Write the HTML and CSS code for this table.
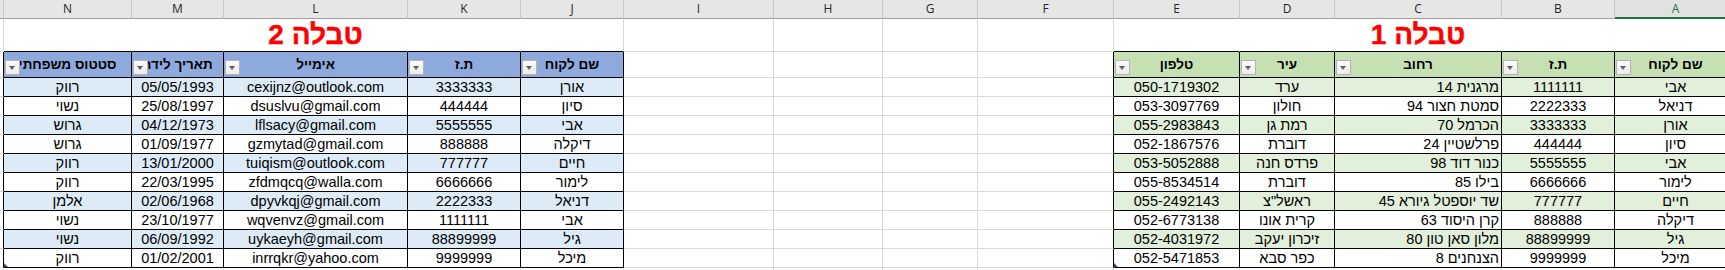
FILE: index.html
```html
<!DOCTYPE html>
<html lang="he">
<head>
<meta charset="utf-8">
<title>Sheet</title>
<link rel="stylesheet" href="styles.css">
</head>
<body>
<div class="sheet">
  <!-- column letters -->
  <div class="colh g"></div>
  <div class="colh">N</div><div class="colh">M</div><div class="colh">L</div><div class="colh">K</div><div class="colh">J</div>
  <div class="colh">I</div><div class="colh">H</div><div class="colh">G</div><div class="colh">F</div>
  <div class="colh">E</div><div class="colh">D</div><div class="colh">C</div><div class="colh">B</div><div class="colh sel">A</div>

  <!-- title row -->
  <div class="c g"></div>
  <div class="c t"></div><div class="c t"></div><div class="c t title">טבלה 2</div><div class="c t"></div><div class="c t tl"></div>
  <div class="c"></div><div class="c"></div><div class="c"></div><div class="c"></div>
  <div class="c t"></div><div class="c t"></div><div class="c t title">טבלה 1</div><div class="c t"></div><div class="c t"></div>

  <!-- header row -->
  <div class="c g e"></div>
  <div class="h hb"><span class="fb"></span>סטטוס משפחתי</div>
  <div class="h hb"><span class="fb"></span>תאריך לידה</div>
  <div class="h hb"><span class="fb"></span>אימייל</div>
  <div class="h hb"><span class="fb"></span>ת.ז</div>
  <div class="h hb"><span class="fb"></span>שם לקוח</div>
  <div class="c"></div><div class="c"></div><div class="c"></div><div class="c e"></div>
  <div class="h hg"><span class="fb"></span>טלפון</div>
  <div class="h hg"><span class="fb"></span>עיר</div>
  <div class="h hg"><span class="fb"></span>רחוב</div>
  <div class="h hg"><span class="fb"></span>ת.ז</div>
  <div class="h hg"><span class="fb"></span>שם לקוח</div>

  <!-- row 1 -->
  <div class="c g e"></div>
  <div class="d bb">רווק</div><div class="d bb">05/05/1993</div><div class="d bb">cexijnz@outlook.com</div><div class="d bb">3333333</div><div class="d bb">אורן</div>
  <div class="c"></div><div class="c"></div><div class="c"></div><div class="c e"></div>
  <div class="d gb">050-1719302</div><div class="d gb">ערד</div><div class="d gb r">מרגנית 14</div><div class="d gb">1111111</div><div class="d gb">אבי</div>

  <!-- row 2 -->
  <div class="c g e"></div>
  <div class="d">נשוי</div><div class="d">25/08/1997</div><div class="d">dsuslvu@gmail.com</div><div class="d">444444</div><div class="d">סיון</div>
  <div class="c"></div><div class="c"></div><div class="c"></div><div class="c e"></div>
  <div class="d">053-3097769</div><div class="d">חולון</div><div class="d r">סמטת חצור 94</div><div class="d">2222333</div><div class="d">דניאל</div>

  <!-- row 3 -->
  <div class="c g e"></div>
  <div class="d bb">גרוש</div><div class="d bb">04/12/1973</div><div class="d bb">lflsacy@gmail.com</div><div class="d bb">5555555</div><div class="d bb">אבי</div>
  <div class="c"></div><div class="c"></div><div class="c"></div><div class="c e"></div>
  <div class="d gb">055-2983843</div><div class="d gb">רמת גן</div><div class="d gb r">הכרמל 70</div><div class="d gb">3333333</div><div class="d gb">אורן</div>

  <!-- row 4 -->
  <div class="c g e"></div>
  <div class="d">גרוש</div><div class="d">01/09/1977</div><div class="d">gzmytad@gmail.com</div><div class="d">888888</div><div class="d">דיקלה</div>
  <div class="c"></div><div class="c"></div><div class="c"></div><div class="c e"></div>
  <div class="d">052-1867576</div><div class="d">דוברת</div><div class="d r">פרלשטיין 24</div><div class="d">444444</div><div class="d">סיון</div>

  <!-- row 5 -->
  <div class="c g e"></div>
  <div class="d bb">רווק</div><div class="d bb">13/01/2000</div><div class="d bb">tuiqism@outlook.com</div><div class="d bb">777777</div><div class="d bb">חיים</div>
  <div class="c"></div><div class="c"></div><div class="c"></div><div class="c e"></div>
  <div class="d gb">053-5052888</div><div class="d gb">פרדס חנה</div><div class="d gb r">כנור דוד 98</div><div class="d gb">5555555</div><div class="d gb">אבי</div>

  <!-- row 6 -->
  <div class="c g e"></div>
  <div class="d">רווק</div><div class="d">22/03/1995</div><div class="d">zfdmqcq@walla.com</div><div class="d">6666666</div><div class="d">לימור</div>
  <div class="c"></div><div class="c"></div><div class="c"></div><div class="c e"></div>
  <div class="d">055-8534514</div><div class="d">דוברת</div><div class="d r">בילו 85</div><div class="d">6666666</div><div class="d">לימור</div>

  <!-- row 7 -->
  <div class="c g e"></div>
  <div class="d bb">אלמן</div><div class="d bb">02/06/1968</div><div class="d bb">dpyvkqj@gmail.com</div><div class="d bb">2222333</div><div class="d bb">דניאל</div>
  <div class="c"></div><div class="c"></div><div class="c"></div><div class="c e"></div>
  <div class="d gb">055-2492143</div><div class="d gb">ראשל"צ</div><div class="d gb r">שד יוספטל גיורא 45</div><div class="d gb">777777</div><div class="d gb">חיים</div>

  <!-- row 8 -->
  <div class="c g e"></div>
  <div class="d">נשוי</div><div class="d">23/10/1977</div><div class="d">wqvenvz@gmail.com</div><div class="d">1111111</div><div class="d">אבי</div>
  <div class="c"></div><div class="c"></div><div class="c"></div><div class="c e"></div>
  <div class="d">052-6773138</div><div class="d">קרית אונו</div><div class="d r">קרן היסוד 63</div><div class="d">888888</div><div class="d">דיקלה</div>

  <!-- row 9 -->
  <div class="c g e"></div>
  <div class="d bb">נשוי</div><div class="d bb">06/09/1992</div><div class="d bb">uykaeyh@gmail.com</div><div class="d bb">88899999</div><div class="d bb">גיל</div>
  <div class="c"></div><div class="c"></div><div class="c"></div><div class="c e"></div>
  <div class="d gb">052-4031972</div><div class="d gb">זיכרון יעקב</div><div class="d gb r">מלון סאן טון 80</div><div class="d gb">88899999</div><div class="d gb">גיל</div>

  <!-- row 10 -->
  <div class="c g e"></div>
  <div class="d corner">רווק</div><div class="d">01/02/2001</div><div class="d">inrrqkr@yahoo.com</div><div class="d">9999999</div><div class="d">מיכל</div>
  <div class="c"></div><div class="c"></div><div class="c"></div><div class="c e"></div>
  <div class="d corner">052-5471853</div><div class="d">כפר סבא</div><div class="d r">הצנחנים 8</div><div class="d">9999999</div><div class="d">מיכל</div>

  <!-- empty row below -->
  <div class="c g"></div>
  <div class="c"></div><div class="c"></div><div class="c"></div><div class="c"></div><div class="c"></div>
  <div class="c"></div><div class="c"></div><div class="c"></div><div class="c"></div>
  <div class="c"></div><div class="c"></div><div class="c"></div><div class="c"></div><div class="c"></div>
</div>
</body>
</html>
```

FILE: styles.css
```css
html, body {
  margin: 0;
  padding: 0;
  background: #ffffff;
}

body {
  width: 1725px;
  height: 270px;
  overflow: hidden;
  font-family: "Liberation Sans", Arial, sans-serif;
  color: #000;
}

.sheet {
  display: grid;
  width: 1737px;
  grid-template-columns: 4px 128px 92px 184px 113px 103px 150px 109px 95px 136px 126px 95px 167px 113px 122px;
  grid-template-rows: 19px 33px 26px repeat(10, 19px) 19px;
}

.sheet > div {
  box-sizing: border-box;
  overflow: hidden;
  white-space: nowrap;
}

/* column letter headers */
.colh {
  background: #e6e6e6;
  border-right: 1px solid #c9c9c9;
  border-bottom: 1px solid #9f9f9f;
  font-family: "Open Sans", "Noto Sans", sans-serif;
  font-size: 12px;
  line-height: 18px;
  text-align: center;
  color: #262626;
}

.colh.sel {
  border-bottom: 2px solid #217346;
  color: #217346;
  background: #e1e1e1;
}

/* plain grid cells */
.c {
  border-right: 1px solid #d8d8d8;
  border-bottom: 1px solid #d8d8d8;
}

.c.e {
  border-right-color: #000;
}

/* title row cells inside the table areas */
.c.t {
  border-right-color: #ffffff;
  border-bottom-color: #000;
}

.c.t.tl {
  border-right-color: #d8d8d8;
}

.title {
  direction: rtl;
  text-align: center;
  color: #ff0000;
  font-weight: bold;
  font-size: 28px;
  line-height: 30px;
  padding-top: 1px;
  -webkit-text-stroke: 0.4px #ff0000;
}

/* table headers */
.h {
  position: relative;
  direction: rtl;
  border-right: 1px solid #000;
  border-bottom: 1px solid #000;
  font-weight: bold;
  font-size: 13.5px;
  line-height: 24px;
  padding-top: 1px;
  text-align: center;
}

.hb { background: #8ea9db; }
.hg { background: #c6e0b4; }

.fb {
  position: absolute;
  left: 1px;
  bottom: 2px;
  width: 15px;
  height: 15px;
  box-sizing: border-box;
  border: 1px solid #b3b3b3;
  background: linear-gradient(#fbfbfb, #ececec);
}

.fb::after {
  content: "";
  position: absolute;
  left: 3px;
  top: 5px;
  width: 0;
  height: 0;
  border-left: 3.5px solid transparent;
  border-right: 3.5px solid transparent;
  border-top: 4px solid #5f5f5f;
}

/* data cells */
.d {
  position: relative;
  direction: rtl;
  border-right: 1px solid #000;
  border-bottom: 1px solid #000;
  font-size: 14.5px;
  line-height: 17px;
  padding-top: 1px;
  text-align: center;
}

.d.r {
  text-align: right;
  padding-right: 2px;
}

.bb { background: #ddebf7; }
.gb { background: #e2efda; }

.corner::after {
  content: "";
  position: absolute;
  left: 0;
  bottom: 0;
  width: 0;
  height: 0;
  border-left: 4px solid #2f4f9a;
  border-top: 4px solid transparent;
}
```
